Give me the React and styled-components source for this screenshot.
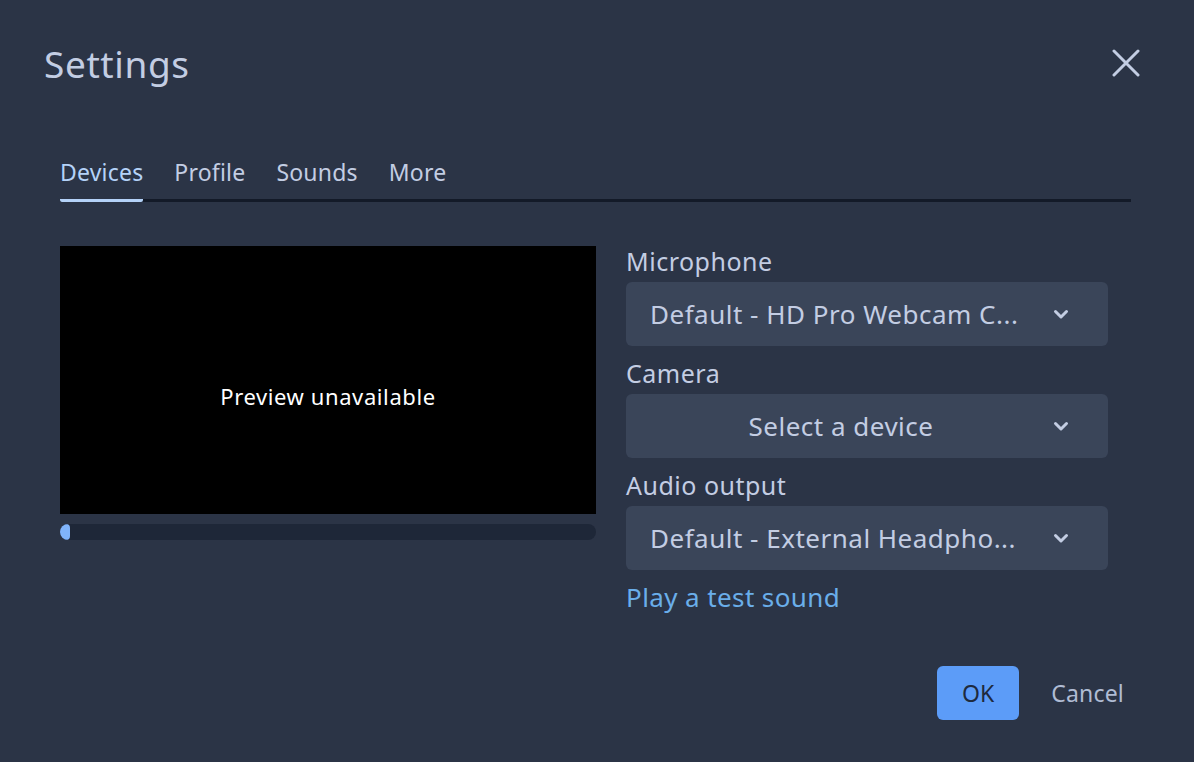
import styled, { createGlobalStyle } from "styled-components"

const GlobalStyle = createGlobalStyle`
  html, body {
    margin: 0;
    padding: 0;
    background: #2b3446;
  }
  body {
    font-family: "Noto Sans", "Open Sans", sans-serif;
    color: #c3cde3;
  }
`

const Tabs = ["Devices", "Profile", "Sounds", "More"]

const Fields = [
  { label: "Microphone", value: "Default - HD Pro Webcam C..." },
  { label: "Camera", value: "Select a device", centered: true },
  { label: "Audio output", value: "Default - External Headpho..." },
]

function Chevron() {
  return (
    <svg width="18" height="18" viewBox="0 0 18 18" fill="none">
      <path
        d="M3.5 6.5l5.5 5.5 5.5-5.5"
        stroke="#c3cde3"
        strokeWidth="3"
        strokeLinecap="round"
        strokeLinejoin="round"
      />
    </svg>
  )
}

function CloseIcon() {
  return (
    <svg width="28" height="28" viewBox="0 0 28 28" fill="none">
      <path
        d="M2 2l24 24M26 2L2 26"
        stroke="#c3cde3"
        strokeWidth="3"
        strokeLinecap="round"
      />
    </svg>
  )
}

function App() {
  return (
    <>
      <GlobalStyle />
      <Dialog>
        <Header>
          <Title>Settings</Title>
          <CloseButton aria-label="Close">
            <CloseIcon />
          </CloseButton>
        </Header>
        <TabBar>
          {Tabs.map((t, i) => (
            <Tab key={t} active={i === 0}>
              {t}
            </Tab>
          ))}
        </TabBar>
        <Body>
          <PreviewColumn>
            <Preview>Preview unavailable</Preview>
            <Meter>
              <MeterFill style={{ width: "10px" }} />
            </Meter>
          </PreviewColumn>
          <FormColumn>
            {Fields.map((f) => (
              <div key={f.label}>
                <Label>{f.label}</Label>
                <Select>
                  <SelectText centered={f.centered}>{f.value}</SelectText>
                  <Chevron />
                </Select>
              </div>
            ))}
            <TestLink>Play a test sound</TestLink>
          </FormColumn>
        </Body>
        <Footer>
          <OkButton>OK</OkButton>
          <CancelButton>Cancel</CancelButton>
        </Footer>
      </Dialog>
    </>
  )
}

const Dialog = styled.div`
  width: 1194px;
  height: 762px;
  box-sizing: border-box;
  padding: 34px 0 0 0;
  display: flex;
  flex-direction: column;
`

const Header = styled.div`
  display: flex;
  align-items: center;
  justify-content: space-between;
  padding: 0 54px 0 44px;
  height: 58px;
`

const Title = styled.h1`
  margin: 0;
  font-size: 37px;
  font-weight: 400;
  letter-spacing: 0.6px;
  color: #c3cde3;
`

const CloseButton = styled.button`
  background: none;
  border: none;
  padding: 0;
  display: flex;
  cursor: pointer;
`

const TabBar = styled.div`
  margin: 65px 63px 0 60px;
  display: flex;
  gap: 31px;
  border-bottom: 3px solid #131a28;
`

const Tab = styled.div`
  font-size: 23px;
  letter-spacing: 0.2px;
  line-height: 30px;
  padding-bottom: 12px;
  margin-bottom: -3px;
  color: ${(p) => (p.active ? "#b4d2f8" : "#c3cde3")};
  border-bottom: 3px solid ${(p) => (p.active ? "#b4d2f8" : "transparent")};
  border-radius: 2px;
  cursor: pointer;
`

const Body = styled.div`
  display: flex;
  gap: 30px;
  padding: 44px 0 0 60px;
`

const PreviewColumn = styled.div`
  width: 536px;
  display: flex;
  flex-direction: column;
  gap: 10px;
`

const Preview = styled.div`
  height: 268px;
  background: #000;
  color: #fff;
  display: flex;
  align-items: center;
  justify-content: center;
  font-size: 22px;
  letter-spacing: 0.6px;
  padding-top: 32px;
  box-sizing: border-box;
`

const Meter = styled.div`
  height: 16px;
  border-radius: 8px;
  background: #1e2738;
  overflow: hidden;
`

const MeterFill = styled.div`
  height: 100%;
  background: #80b4fb;
  border-radius: 4px;
`

const FormColumn = styled.div`
  width: 482px;
  display: flex;
  flex-direction: column;
  gap: 12px;
`

const Label = styled.div`
  font-size: 25px;
  letter-spacing: 0.5px;
  line-height: 30px;
  margin-bottom: 6px;
  color: #c3cde3;
`

const Select = styled.div`
  height: 64px;
  border-radius: 6px;
  background: #3a4559;
  display: flex;
  align-items: center;
  padding: 0 38px 0 24px;
  gap: 20px;
  cursor: pointer;
`

const SelectText = styled.div`
  flex: 1;
  min-width: 0;
  font-size: 26px;
  letter-spacing: 0.5px;
  white-space: nowrap;
  overflow: hidden;
  text-overflow: ellipsis;
  text-align: ${(p) => (p.centered ? "center" : "left")};
  color: #c3cde3;
`

const TestLink = styled.a`
  font-size: 26px;
  letter-spacing: 0.4px;
  line-height: 30px;
  color: #6aaeea;
  cursor: pointer;
`

const Footer = styled.div`
  margin-top: auto;
  display: flex;
  align-items: center;
  justify-content: flex-end;
  gap: 32px;
  padding: 0 70px 42px 0;
`

const OkButton = styled.button`
  width: 82px;
  height: 54px;
  border: none;
  border-radius: 6px;
  background: #5c9cf8;
  color: #1e2a3e;
  font-family: inherit;
  font-size: 23px;
  cursor: pointer;
`

const CancelButton = styled.button`
  background: none;
  border: none;
  padding: 0;
  font-family: inherit;
  font-size: 23px;
  letter-spacing: 0.2px;
  color: #b0bcd4;
  cursor: pointer;
`

export default App
